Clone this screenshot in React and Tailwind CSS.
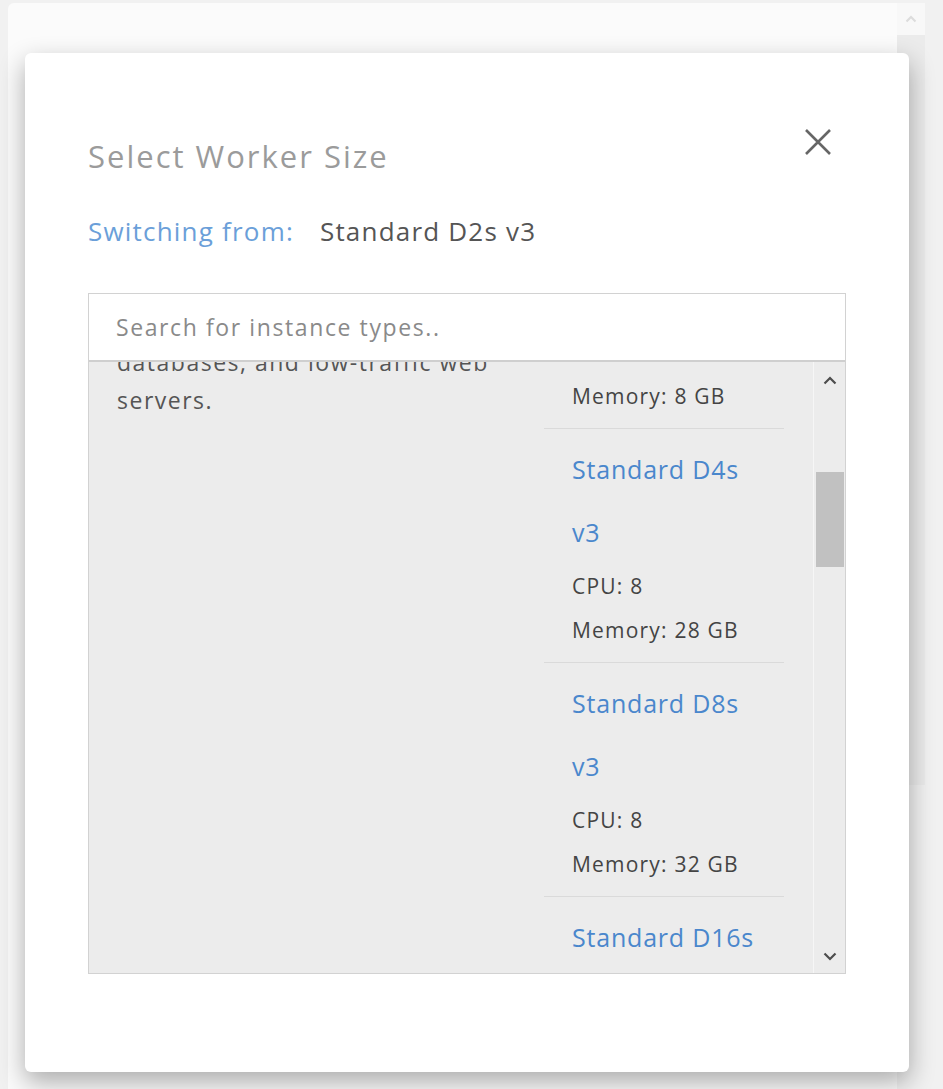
import React from "react";

const items = [
  { name: ["Standard D2s", "v3"], cpu: 2, mem: 8 },
  { name: ["Standard D4s", "v3"], cpu: 8, mem: 28 },
  { name: ["Standard D8s", "v3"], cpu: 8, mem: 32 },
  { name: ["Standard D16s", "v3"], cpu: 16, mem: 64 },
];

function Chevron({ down }) {
  return (
    <svg width="14" height="9" viewBox="0 0 14 9" fill="none">
      <path
        d={down ? "M1.5 1.5 L7 7 L12.5 1.5" : "M1.5 7.5 L7 2 L12.5 7.5"}
        stroke="#4d4d4d"
        strokeWidth="2.2"
      />
    </svg>
  );
}

export default function App() {
  return (
    <div className="relative w-[943px] h-[1089px] overflow-hidden bg-[#f1f1f1] font-['Open_Sans',sans-serif]">
      {/* underlying page (dimmed) */}
      <div className="flex pt-[3px] pl-[8px] h-full">
        <div className="w-[889px] bg-[#fbfbfb] rounded-tl-[6px]"></div>
        <div className="w-[28px] flex flex-col">
          <div className="h-[32px] bg-[#f8f8f8] flex items-center justify-center">
            <svg width="12" height="8" viewBox="0 0 12 8" fill="none">
              <path d="M1.5 6.5 L6 2 L10.5 6.5" stroke="#dcdcdc" strokeWidth="2" />
            </svg>
          </div>
          <div className="h-[750px] bg-[#ebebeb]"></div>
          <div className="flex-1 bg-[#f1f1f1]"></div>
        </div>
      </div>

      {/* modal */}
      <div className="absolute left-[25px] top-[53px] w-[884px] h-[1019px] bg-white rounded-[6px] shadow-[0_10px_26px_rgba(0,0,0,0.32)] px-[63px] pt-[85px]">
        <button className="absolute right-[77px] top-[75px] w-[28px] h-[28px] flex items-center justify-center">
          <svg width="28" height="28" viewBox="0 0 28 28" fill="none">
            <path d="M2 2 L26 26 M26 2 L2 26" stroke="#666" strokeWidth="2.6" />
          </svg>
        </button>

        <h2 className="text-[31px] leading-[36px] text-[#9b9b9b] font-normal tracking-[2px]">
          Select Worker Size
        </h2>

        <div className="mt-[42px] flex items-center text-[26px] leading-[30px] tracking-[1.2px]">
          <span className="text-[#6b9fd9]">Switching from:</span>
          <span className="ml-[26px] text-[#555]">Standard D2s v3</span>
        </div>

        <div className="mt-[47px] border border-[#d2d2d2]">
          <input
            className="block w-full h-[68px] px-[27px] bg-white text-[23px] tracking-[1.6px] text-[#555] placeholder:text-[#8a8a8a] outline-none border-b-2 border-[#cfcfcf]"
            placeholder="Search for instance types.."
          />
          <div className="flex h-[611px] bg-[#ececec]">
            <div className="flex-1 overflow-hidden">
              <div className="flex -mt-[167px]">
                <div className="flex-1 pl-[28px] pt-[34px] text-[23px] leading-[38px] text-[#555] tracking-[1.5px]">
                  <div>Optimized for general purpose</div>
                  <div>workloads such as testing,</div>
                  <div>development, small to medium</div>
                  <div>databases, and low-traffic web</div>
                  <div>servers.</div>
                </div>
                <div className="w-[240px] mr-[29px]">
                  {items.map((it, i) => (
                    <div
                      key={i}
                      className={
                        "pl-[28px] pt-[9px] pb-[10px] " +
                        (i > 0 ? "border-t border-[#dadada]" : "")
                      }
                    >
                      <div className="text-[25px] leading-[63px] text-[#4a87cc] tracking-[0.8px] whitespace-nowrap">
                        <div>{it.name[0]}</div>
                        <div>{it.name[1]}</div>
                      </div>
                      <div className="text-[21px] leading-[44px] text-[#444] tracking-[1.2px] whitespace-nowrap">
                        <div>CPU: {it.cpu}</div>
                        <div>Memory: {it.mem} GB</div>
                      </div>
                    </div>
                  ))}
                </div>
              </div>
            </div>
            <div className="w-[32px] border-l border-[#f6f6f6] bg-[#ececec] flex flex-col items-center">
              <div className="h-[36px] flex items-center justify-center">
                <Chevron />
              </div>
              <div className="mt-[74px] w-[28px] h-[95px] bg-[#c1c1c1]"></div>
              <div className="flex-1"></div>
              <div className="h-[34px] flex items-center justify-center">
                <Chevron down />
              </div>
            </div>
          </div>
        </div>
      </div>
    </div>
  );
}
